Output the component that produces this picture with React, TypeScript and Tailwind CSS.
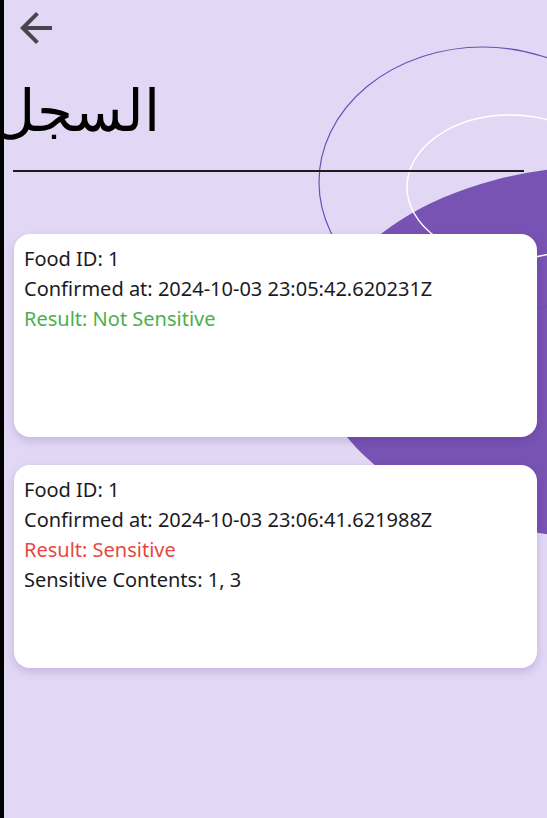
type HistoryEntry = {
  foodId: number;
  confirmedAt: string;
  sensitive: boolean;
  contents?: number[];
};

const history: HistoryEntry[] = [
  { foodId: 1, confirmedAt: "2024-10-03 23:05:42.620231Z", sensitive: false },
  { foodId: 1, confirmedAt: "2024-10-03 23:06:41.621988Z", sensitive: true, contents: [1, 3] },
];

// background decoration: purple blob + two outline rings, sits under everything
function Backdrop() {
  return (
    <svg className="absolute inset-0 pointer-events-none" width="547" height="818" viewBox="0 0 547 818">
      <ellipse cx="605" cy="352" rx="290" ry="186" fill="#7853b3" />
      <ellipse cx="483" cy="182" rx="164" ry="135" fill="none" stroke="#6d4fb3" strokeWidth="1.2" />
      <ellipse cx="510" cy="187" rx="103" ry="72" fill="none" stroke="#ffffff" strokeWidth="1.5" />
    </svg>
  );
}

function HistoryCard({ entry }: { entry: HistoryEntry }) {
  return (
    <div className="h-[203px] rounded-[16px] bg-white px-[10px] py-[10px] shadow-[0_4px_10px_rgba(60,30,110,0.18)] text-[20px] leading-[30px] text-[#1c1b1f]">
      <p>Food ID: {entry.foodId}</p>
      <p>Confirmed at: {entry.confirmedAt}</p>
      {entry.sensitive ? (
        <p className="text-[#e5483f]">Result: Sensitive</p>
      ) : (
        <p className="text-[#4caf50]">Result: Not Sensitive</p>
      )}
      {entry.contents && <p>Sensitive Contents: {entry.contents.join(", ")}</p>}
    </div>
  );
}

export default function App() {
  return (
    <div className="flex h-[818px] w-[547px] overflow-hidden bg-black" style={{ fontFamily: '"Noto Sans", "DejaVu Sans", sans-serif' }}>
      <div className="w-[4px] shrink-0 bg-black" />
      <div className="relative flex-1 overflow-hidden bg-[#e2d8f6]">
        <div className="absolute inset-0 -left-[4px]">
          <Backdrop />
        </div>

        <div className="relative">
          <button className="ml-[8px] mt-[4px] flex h-[48px] w-[48px] items-center justify-center text-[#49454f]">
            <svg width="48" height="48" viewBox="0 0 24 24" fill="currentColor">
              <path d="M20 11H7.83l5.59-5.59L12 4l-8 8 8 8 1.41-1.41L7.83 13H20v-2z" />
            </svg>
          </button>

          <h1
            dir="rtl"
            className="w-[156px] whitespace-nowrap text-right text-[58px] leading-[70px] font-light text-black mt-[24px]"
            style={{ fontFamily: '"DejaVu Sans", "Noto Sans", sans-serif' }}
          >
            السجل
          </h1>

          <div className="ml-[9px] mr-[23px] mt-[24px] h-[2px] bg-[#1d1b20]" />

          <div className="mt-[62px] ml-[10px] mr-[10px] flex flex-col gap-[28px]">
            {history.map((entry, i) => (
              <HistoryCard key={i} entry={entry} />
            ))}
          </div>
        </div>
      </div>
    </div>
  );
}
